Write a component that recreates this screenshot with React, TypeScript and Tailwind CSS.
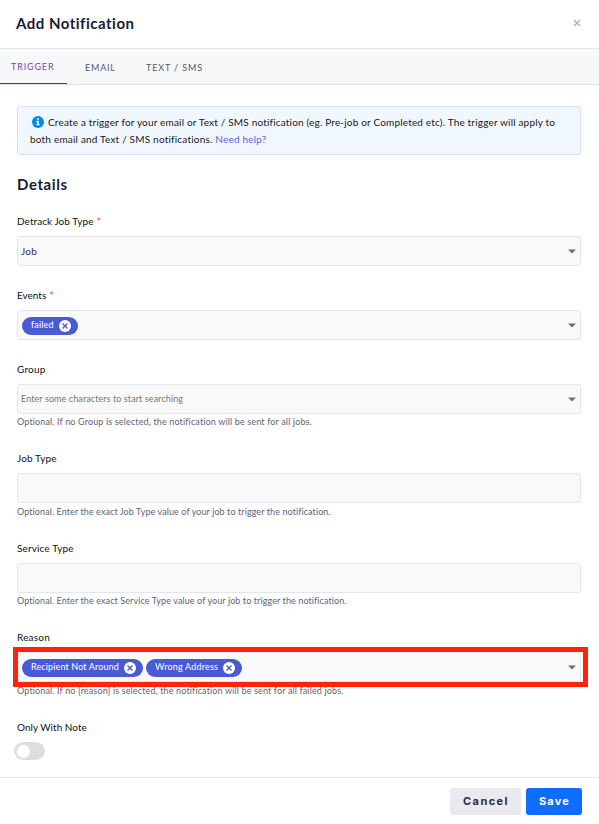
import { useState } from 'react';
import type { ReactNode } from 'react';

const tabs = ['TRIGGER', 'EMAIL', 'TEXT / SMS'];

function Chip({ label, textClass }: { label: string; textClass: string }) {
  return (
    <span className="mt-[2px] flex h-[18px] items-center rounded-full bg-[#4a5ad4] pl-[9px] pr-[7px] text-white">
      <span className={`mb-[2px] block whitespace-nowrap text-[9px] leading-[12px] ${textClass}`}>{label}</span>
      <svg width="12" height="12" viewBox="0 0 12 12" className="shrink-0">
        <circle cx="6" cy="6" r="6" fill="#fff" />
        <path d="M3.5 3.5l5 5M8.5 3.5l-5 5" stroke="#4a5ad4" strokeWidth="1.4" />
      </svg>
    </span>
  );
}

function Caret() {
  return (
    <svg width="8" height="5" viewBox="0 0 8 5" className="ml-auto shrink-0">
      <path d="M0 0.4h8L4 4.6z" fill="#707070" />
    </svg>
  );
}

function Label({ children, required, textClass }: { children: ReactNode; required?: boolean; textClass: string }) {
  return (
    <div className="flex h-[15px] items-center text-[10px] leading-[15px] text-[#111]">
      <span className={`block whitespace-nowrap ${textClass}`}>{children}</span>
      {required && <span className="ml-[3px] text-[11px] text-[#ff4b4b]">*</span>}
    </div>
  );
}

function Box({ children }: { children?: ReactNode }) {
  return (
    <div className="flex h-[30px] w-full items-center rounded-[3px] border border-[#e4e6ef] bg-[#f9f9f9] pl-1 pr-[4px]">
      {children}
    </div>
  );
}

function Help({ children, textClass }: { children: ReactNode; textClass: string }) {
  return (
    <p className="flex h-4 items-center text-[9px] leading-4 text-[#626278]">
      <span className={`block whitespace-nowrap ${textClass}`}>{children}</span>
    </p>
  );
}

export default function App() {
  const [active, setActive] = useState('TRIGGER');

  return (
    <div className="flex h-[824px] w-[599px] flex-col overflow-hidden bg-white font-['Lato','Liberation_Sans',sans-serif]">
      <header className="flex h-[49px] shrink-0 items-center justify-between border-b border-[#e4e6ef] pl-4 pr-[18px]">
        <h1 className="whitespace-nowrap pb-[2px] text-[15px] font-bold leading-5 tracking-[0.5px] text-[#181c32]">Add Notification</h1>
        <button aria-label="Close" className="pb-[2px]">
          <svg width="8" height="8" viewBox="0 0 8 8">
            <path d="M1 1l6 6M7 1L1 7" stroke="#b3b4bd" strokeWidth="1.6" />
          </svg>
        </button>
      </header>

      <nav className="flex h-9 shrink-0 border-b border-[#e6dcdf] bg-[#f7f8fa] text-[9px] text-[#55566a]">
        {tabs.map((tab) => (
          <button
            key={tab}
            onClick={() => setActive(tab)}
            className={`h-[35px] whitespace-nowrap pl-[11px] pt-[2px] ${tab === 'TRIGGER' ? 'w-[67px] text-left tracking-[0.85px]' : ''} ${
              tab === 'EMAIL' ? 'ml-[7px] w-[61px] text-left tracking-[0.8px]' : ''
            } ${tab === 'TEXT / SMS' ? 'text-left tracking-[0.88px]' : ''} ${
              tab === active ? 'border-b border-[#5b2ca8] text-[#7345b8]' : ''
            }`}
          >
            {tab}
          </button>
        ))}
      </nav>

      <main className="flex-1 pl-[17px] pr-[18px] pt-[21px]">
        <div className="h-[49px] w-full rounded-[3px] border border-[#cfe2ff] bg-[#f1f7ff] pl-3 pt-[7px] text-[10px] leading-[17px] text-[#181818]">
          <div className="flex items-center whitespace-nowrap">
            <svg width="12" height="12" viewBox="0 0 12 12" className="mb-[2px] ml-[2px] mr-[4px] shrink-0">
              <circle cx="6" cy="6" r="6" fill="#0888e8" />
              <path d="M5.1 2.3h1.7v1.5H5.1zM4.5 4.8h2.3v3.3h.8v1.1H4.4V8.1h.8V5.9h-.7z" fill="#fff" />
            </svg>
            <span className="tracking-[0.18px]">
              Create a trigger for your email or Text / SMS notification (eg. Pre-job or Completed etc). The trigger will apply to
            </span>
          </div>
          <div className="whitespace-nowrap tracking-[0.2px]">
            both email and Text / SMS notifications. <a className="text-[#5863d4]">Need help?</a>
          </div>
        </div>

        <h2 className="mt-[19px] h-5 text-[15px] font-bold leading-5 tracking-[0.6px] text-[#181c32]">Details</h2>

        <section className="mt-5">
          <Label required textClass="tracking-[0.05px]">Detrack Job Type</Label>
          <div className="mt-[7px]">
            <Box>
              <span className="-ml-px text-[10px] tracking-[0.3px] text-[#333]">Job</span>
              <Caret />
            </Box>
          </div>
        </section>

        <section className="mt-[22px]">
          <Label required textClass="tracking-[0px]">Events</Label>
          <div className="mt-[7px]">
            <Box>
              <Chip label="failed" textClass="w-[28px] tracking-[0.15px]" />
              <Caret />
            </Box>
          </div>
        </section>

        <section className="mt-[22px]">
          <Label textClass="tracking-[0.2px]">Group</Label>
          <div className="mt-[7px]">
            <Box>
              <span className="-ml-px pb-[1px] text-[9px] tracking-[0.09px] text-[#777]">Enter some characters to start searching</span>
              <Caret />
            </Box>
          </div>
          <Help textClass="tracking-[0.145px]">Optional. If no Group is selected, the notification will be sent for all jobs.</Help>
        </section>

        <section className="mt-[21px]">
          <Label textClass="tracking-[0.12px]">Job Type</Label>
          <div className="mt-[7px]">
            <Box />
          </div>
          <Help textClass="pt-[2px] tracking-[0.09px]">Optional. Enter the exact Job Type value of your job to trigger the notification.</Help>
        </section>

        <section className="mt-[22px]">
          <Label textClass="tracking-[0.13px]">Service Type</Label>
          <div className="mt-[7px]">
            <Box />
          </div>
          <Help textClass="tracking-[0.095px]">Optional. Enter the exact Service Type value of your job to trigger the notification.</Help>
        </section>

        <section className="mt-[21px]">
          <Label textClass="tracking-[0.2px]">Reason</Label>
          <div className="relative mt-[7px]">
            <Box>
              <div className="flex gap-[3px]">
                <Chip label="Recipient Not Around" textClass="w-[93px] tracking-[0.13px]" />
                <Chip label="Wrong Address" textClass="w-[68px] tracking-[0.2px]" />
              </div>
              <Caret />
            </Box>
            <div className="pointer-events-none absolute -left-1 -top-[5px] h-10 w-[575px] border-[5px] border-[#ff220c]" />
          </div>
          <Help textClass="pt-[2px] tracking-[0.14px]">Optional. If no {'{reason}'} is selected, the notification will be sent for all failed jobs.</Help>
        </section>

        <section className="mt-[22px]">
          <Label textClass="tracking-[0.02px]">Only With Note</Label>
          <button role="switch" aria-checked="false" aria-label="Only With Note" className="-ml-[3px] mt-[7px] flex h-[18px] w-[31px] items-center rounded-full bg-[#dedede] pl-[3px]">
            <span className="h-[13px] w-[13px] rounded-full bg-white" />
          </button>
        </section>
      </main>

      <footer className="flex h-[47px] shrink-0 items-start justify-end gap-[5px] border-t border-[#ebebeb] pr-[17px] pt-[10px] font-['Inter','Liberation_Sans',sans-serif] text-[11px] font-bold">
        <button className="h-[27px] w-[71px] whitespace-nowrap rounded-[3px] bg-[#e9e9ef] pl-px tracking-[1.45px] text-[#2d2e42]">Cancel</button>
        <button className="h-[27px] w-14 whitespace-nowrap rounded-[3px] bg-[#0d6efd] pl-px tracking-[1.2px] text-white">Save</button>
      </footer>
    </div>
  );
}
